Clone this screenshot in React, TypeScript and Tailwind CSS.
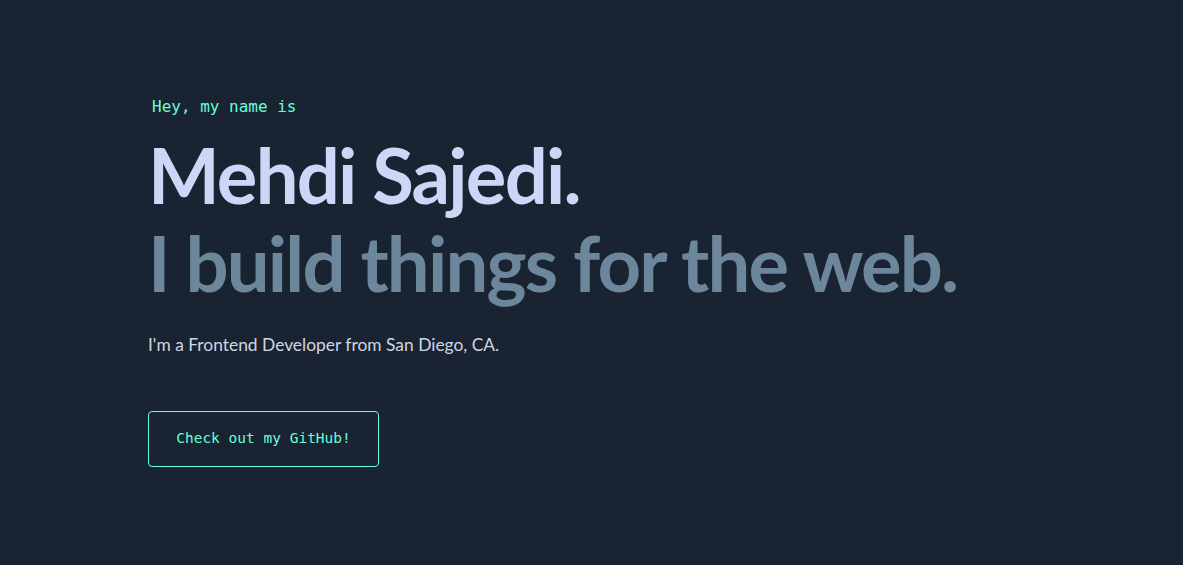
export default function App() {
  return (
    <main className="min-h-[565px] w-full bg-[#1a2331] font-['Lato',sans-serif]">
      <section className="flex flex-col items-start pl-[148px] pt-[95px]">
        <h1 className="ml-1 font-['DejaVu_Sans_Mono',monospace] text-[16px] leading-[24px] text-[#64ffda]">
          Hey, my name is
        </h1>
        <h2 className="mt-[16px] text-[76px] font-bold leading-[80px] tracking-[-1.8px] text-[#ccd6f6]">
          Mehdi Sajedi.
        </h2>
        <h3 className="mt-[8px] text-[76px] font-bold leading-[80px] tracking-[-1.8px] text-[#6c869c]">
          I build things for the web.
        </h3>
        <p className="mt-[29px] text-[17.4px] leading-[26px] text-[#cfd6e3]">
          I'm a Frontend Developer from San Diego, CA.
        </p>
        <a
          href="#"
          className="mt-[53px] flex h-[56px] w-[231px] items-center justify-center rounded-[4px] border border-[#64ffda] font-['DejaVu_Sans_Mono',monospace] text-[14.5px] text-[#64ffda]"
        >
          Check out my GitHub!
        </a>
      </section>
    </main>
  )
}
